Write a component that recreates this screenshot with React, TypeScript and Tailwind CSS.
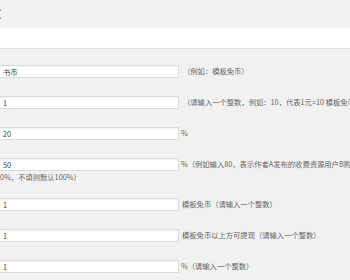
const rows = [
  { value: "书币", note: "（例如：模板免币）", gap: "ml-[4px]" },
  { value: "1", note: "（请输入一个整数，例如：10，代表1元=10 模板免币）", gap: "ml-[4px]" },
  { value: "20", note: "%", gap: "ml-[2px]" },
  { value: "50", note: "%（例如输入80，表示作者A发布的收费资源用户B购买", gap: "ml-[2px]", wrap: "40%，不填则默认100%）" },
  { value: "1", note: "模板免币（请输入一个整数）", gap: "ml-[3px]" },
  { value: "1", note: "模板免币以上方可提现（请输入一个整数）", gap: "ml-[3px]" },
  { value: "1", note: "%（请输入一个整数）", gap: "ml-[2px]" },
];

export default function App() {
  return (
    <div className="h-[280px] w-[350px] overflow-hidden bg-[#f1f1f1] font-['Noto_Sans_CJK_SC','Noto_Sans',sans-serif] text-[7.3px] text-[#666]">
      <div className="flex h-[28px] flex-col justify-center gap-[6px]">
        <span className="h-[2px] w-[1px] bg-[#8fb3d9]" />
        <span className="h-[2px] w-[1px] bg-[#8fb3d9]" />
      </div>
      <div className="h-[21px] border-b border-[#e0e0e0] bg-white" />

      <div className="mt-[16px] flex flex-col gap-[18px]">
        {rows.map((row, i) => (
          <div key={i}>
            <div className="flex h-[13px] items-center whitespace-nowrap">
              <input
                readOnly
                value={row.value}
                className="-ml-[2px] h-[13px] w-[181px] shrink-0 border border-[#dcdcdc] bg-white pl-[4px] text-[7.3px] leading-none text-[#444] shadow-[inset_0_1px_2px_rgba(0,0,0,0.06)] outline-none"
              />
              <span className={row.gap}>{row.note}</span>
            </div>
            {row.wrap && (
              <div className="-ml-[4px] h-[9px] pt-[2px] leading-[9px] whitespace-nowrap">{row.wrap}</div>
            )}
          </div>
        ))}
      </div>
    </div>
  );
}
